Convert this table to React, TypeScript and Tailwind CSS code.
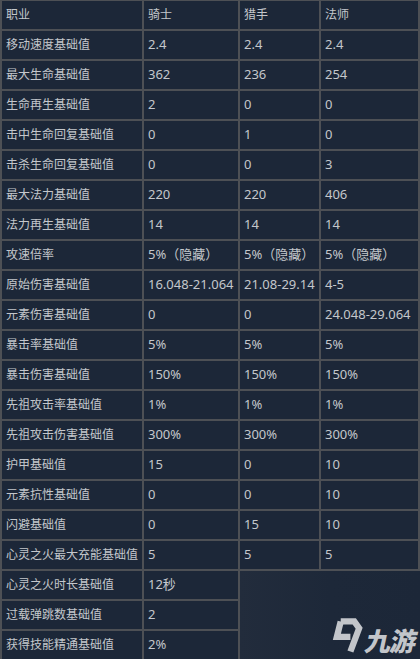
const HEADER = ["职业", "骑士", "猎手", "法师"];

const ROWS: Array<[string, string, string, string]> = [
  ["移动速度基础值", "2.4", "2.4", "2.4"],
  ["最大生命基础值", "362", "236", "254"],
  ["生命再生基础值", "2", "0", "0"],
  ["击中生命回复基础值", "0", "1", "0"],
  ["击杀生命回复基础值", "0", "0", "3"],
  ["最大法力基础值", "220", "220", "406"],
  ["法力再生基础值", "14", "14", "14"],
  ["攻速倍率", "5%（隐藏）", "5%（隐藏）", "5%（隐藏）"],
  ["原始伤害基础值", "16.048-21.064", "21.08-29.14", "4-5"],
  ["元素伤害基础值", "0", "0", "24.048-29.064"],
  ["暴击率基础值", "5%", "5%", "5%"],
  ["暴击伤害基础值", "150%", "150%", "150%"],
  ["先祖攻击率基础值", "1%", "1%", "1%"],
  ["先祖攻击伤害基础值", "300%", "300%", "300%"],
  ["护甲基础值", "15", "0", "10"],
  ["元素抗性基础值", "0", "0", "10"],
  ["闪避基础值", "0", "15", "10"],
  ["心灵之火最大充能基础值", "5", "5", "5"],
];

// only knight has values for these
const EXTRA: Array<[string, string]> = [
  ["心灵之火时长基础值", "12秒"],
  ["过载弹跳数基础值", "2"],
  ["获得技能精通基础值", "2%"],
];

const font = { fontFamily: '"Noto Sans", "Noto Sans CJK SC", sans-serif' };

function Cell({ children, label }: { children: React.ReactNode; label?: boolean }) {
  return (
    <div
      className={`h-[30px] flex items-center pl-[4px] whitespace-nowrap overflow-hidden border-r-2 border-b-2 border-[#4d5055] text-[#c4c7cc] ${
        label ? "text-[12px]" : "text-[13px]"
      }`}
    >
      {children}
    </div>
  );
}

function Logo() {
  return (
    <div className="flex items-end gap-[3px] text-[#c2c5ca]">
      <svg width="31" height="38" viewBox="0 0 32 38">
        <path
          d="M9 4 L23 4 L28 11 L19 35"
          fill="none"
          stroke="#c2c5ca"
          strokeWidth="6.5"
          strokeLinejoin="miter"
        />
        <path
          d="M9 4 L5 20 L19 20"
          fill="none"
          stroke="#c2c5ca"
          strokeWidth="6.5"
          strokeLinejoin="miter"
        />
      </svg>
      <span className="inline-block -skew-x-12 text-[26px] leading-none font-black mb-[1px] tracking-[-1px]">
        九游
      </span>
    </div>
  );
}

export default function App() {
  return (
    <div className="w-[420px] h-[659px] overflow-hidden bg-[#1c2738]" style={font}>
      <div className="grid grid-cols-[142px_96px_81px_99px] border-t border-l-2 border-[#4d5055]">
        {HEADER.map((h) => (
          <Cell key={h} label>
            {h}
          </Cell>
        ))}
        {ROWS.map((r) => [
          <Cell key={r[0]} label>
            {r[0]}
          </Cell>,
          <Cell key={r[0] + "1"}>{r[1]}</Cell>,
          <Cell key={r[0] + "2"}>{r[2]}</Cell>,
          <Cell key={r[0] + "3"}>{r[3]}</Cell>,
        ])}
      </div>
      <div className="flex">
        <div className="grid grid-cols-[142px_96px] border-l-2 border-[#4d5055]">
          {EXTRA.map((r) => [
            <Cell key={r[0]} label>
              {r[0]}
            </Cell>,
            <Cell key={r[0] + "1"}>{r[1]}</Cell>,
          ])}
        </div>
        <div className="flex-1 flex items-end justify-end pb-[6px] pr-[4px] bg-gradient-to-r from-[#222c3c] via-[#1d2839] to-[#1c2738]">
          <Logo />
        </div>
      </div>
    </div>
  );
}
